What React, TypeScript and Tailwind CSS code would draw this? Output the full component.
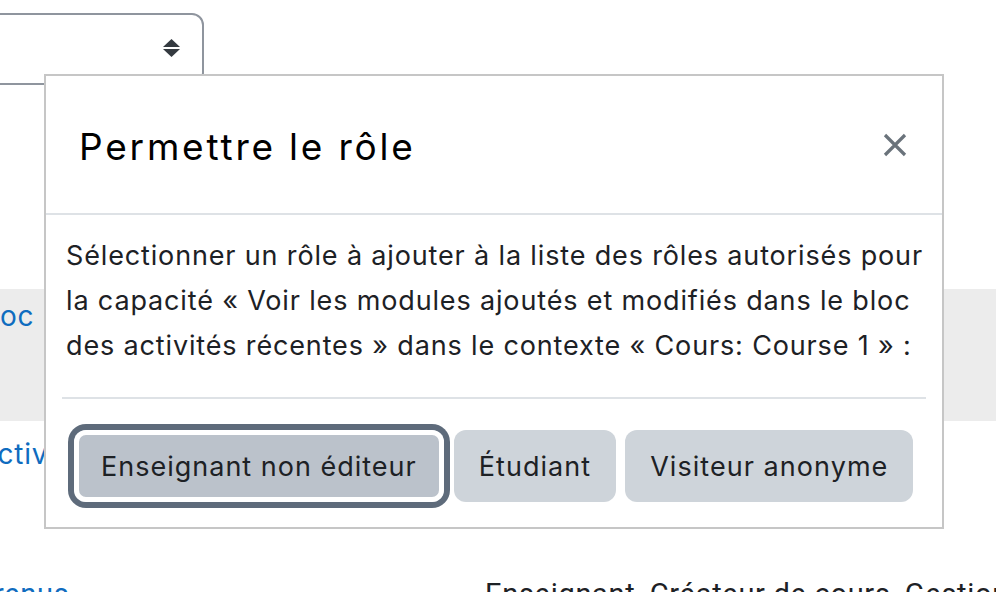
import React from "react";

const bodyLines = [
  "Sélectionner un rôle à ajouter à la liste des rôles autorisés pour",
  "la capacité « Voir les modules ajoutés et modifiés dans le bloc",
  "des activités récentes » dans le contexte « Cours: Course 1 » :",
];

const roles = ["Enseignant non éditeur", "Étudiant", "Visiteur anonyme"];

const App = () => {
  return (
    <div className="relative w-[996px] h-[592px] overflow-hidden bg-white font-['Inter','Liberation_Sans',sans-serif] text-[#1d2125]">
      {/* Page behind the dialog */}
      <div className="pt-[13px]">
        <div className="ml-[-20px] w-[224px] h-[72px] rounded-[12px] border-2 border-[#8f959e] flex items-center justify-end pr-[22px]">
          <svg width="17" height="19" viewBox="0 0 17 19" className="mt-[-2px]">
            <path d="M8.5 0 L17 8 L0 8 Z" fill="#343a40" />
            <path d="M0 10 L17 10 L8.5 18 Z" fill="#343a40" />
          </svg>
        </div>
        <div className="h-[204px]" />
        <div className="h-[132px] bg-[#ececec] pt-[6px]">
          <span className="text-[28px] tracking-[0.8px] text-[#0f6cbf]">oc d</span>
        </div>
        <div className="pt-[12px] ml-[-19px] text-[28px] tracking-[0.8px] text-[#0f6cbf]">activités récentes</div>
        <div className="mt-[98px] flex text-[29px] tracking-[0.7px] font-['Roboto',sans-serif]">
          <span className="text-[#0f6cbf] ml-[-6px] w-[491px] shrink-0">renus</span>
          <span className="text-[#1d2125] whitespace-nowrap">Enseignant, Créateur de cours, Gestionnaire</span>
        </div>
      </div>

      {/* Dialog */}
      <div className="absolute left-[44px] top-[74px] w-[900px] h-[455px] bg-white border-2 border-[#c6c6c6]">
        <div className="h-[139px] border-b-2 border-[#dee2e6] flex items-center justify-between pl-[33px] pr-[35px]">
          <h5 className="text-[37px] tracking-[2.8px] text-black leading-none pt-[3px]">
            Permettre le rôle
          </h5>
          <button className="w-[24px] h-[24px] flex items-center justify-center">
            <svg width="24" height="24" viewBox="0 0 24 24">
              <path d="M2 2 L22 22 M22 2 L2 22" stroke="#6a737b" strokeWidth="3.2" />
            </svg>
          </button>
        </div>
        <div className="px-[20px] pt-[18px]">
          <p className="text-[27px] tracking-[0.85px] leading-[45px] whitespace-nowrap">
            {bodyLines.map((l) => (
              <React.Fragment key={l}>
                {l}
                <br />
              </React.Fragment>
            ))}
          </p>
        </div>
        <div className="mx-[16px] mt-[29px] border-t-2 border-[#dee2e6] pt-[31px] pl-[12px] flex gap-[9px]">
          {roles.map((r, i) => (
            <button
              key={r}
              className={
                i === 0
                  ? "h-[72px] px-[27px] pt-[3px] rounded-[12px] text-[27px] tracking-[1px] bg-[#bbc2cb] shadow-[inset_0_0_0_5px_#fff,0_0_0_6px_#5e6b7b] mr-[1px]"
                  : "h-[72px] px-[25px] pt-[3px] rounded-[12px] text-[27px] tracking-[1.05px] bg-[#ced4da]"
              }
            >
              {r}
            </button>
          ))}
        </div>
      </div>
    </div>
  );
};

export default App;
